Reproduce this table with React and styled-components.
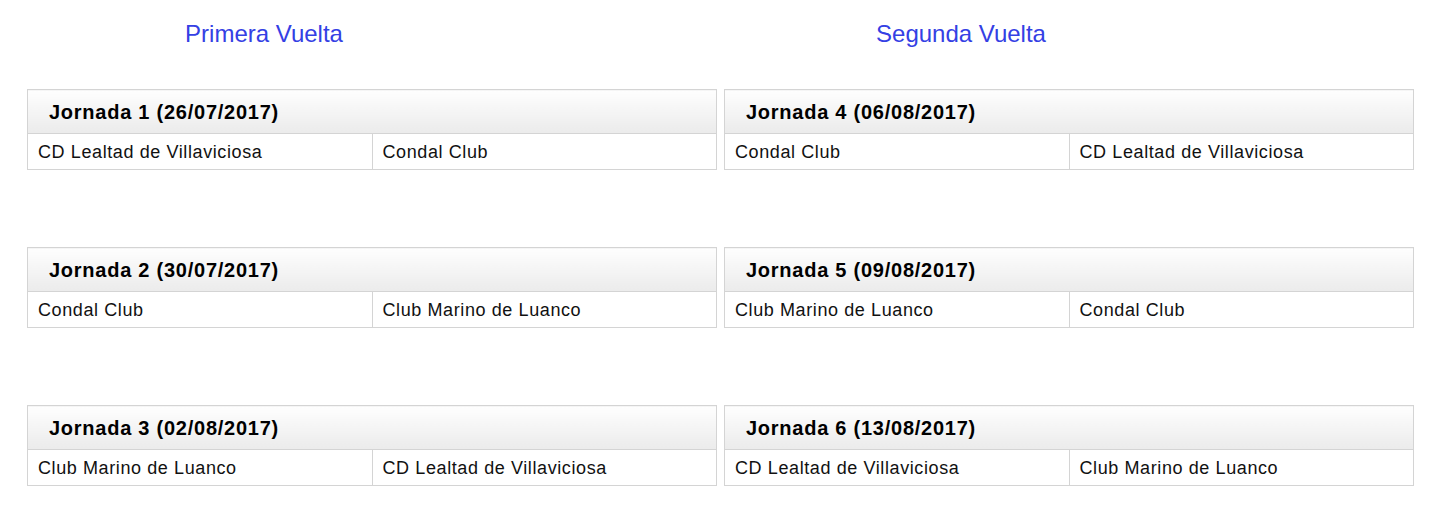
import React from 'react';
import styled, { createGlobalStyle } from 'styled-components';

const GlobalStyle = createGlobalStyle`
  body {
    margin: 0;
    background: #fff;
    font-family: "Liberation Sans", Arial, sans-serif;
  }
`;

const vueltas = [
  {
    title: 'Primera Vuelta',
    jornadas: [
      { num: 1, date: '26/07/2017', home: 'CD Lealtad de Villaviciosa', away: 'Condal Club' },
      { num: 2, date: '30/07/2017', home: 'Condal Club', away: 'Club Marino de Luanco' },
      { num: 3, date: '02/08/2017', home: 'Club Marino de Luanco', away: 'CD Lealtad de Villaviciosa' },
    ],
  },
  {
    title: 'Segunda Vuelta',
    jornadas: [
      { num: 4, date: '06/08/2017', home: 'Condal Club', away: 'CD Lealtad de Villaviciosa' },
      { num: 5, date: '09/08/2017', home: 'Club Marino de Luanco', away: 'Condal Club' },
      { num: 6, date: '13/08/2017', home: 'CD Lealtad de Villaviciosa', away: 'Club Marino de Luanco' },
    ],
  },
];

const App = () => {
  return (
    <>
      <GlobalStyle />
      <Page>
        {vueltas.map((v) => (
          <Column key={v.title}>
            <VueltaTitle>{v.title}</VueltaTitle>
            <JornadaList>
              {v.jornadas.map((j) => (
                <JornadaTable key={j.num}>
                  <thead>
                    <tr>
                      <JornadaHead colSpan={2}>
                        Jornada {j.num} ({j.date})
                      </JornadaHead>
                    </tr>
                  </thead>
                  <tbody>
                    <tr>
                      <TeamCell>{j.home}</TeamCell>
                      <TeamCell>{j.away}</TeamCell>
                    </tr>
                  </tbody>
                </JornadaTable>
              ))}
            </JornadaList>
          </Column>
        ))}
      </Page>
    </>
  );
};

export default App;

const Page = styled.div`
  display: grid;
  grid-template-columns: 690px 690px;
  column-gap: 7px;
  padding: 0 21px 0 27px;
`;

const Column = styled.div`
  display: flex;
  flex-direction: column;
`;

const VueltaTitle = styled.div`
  width: 474px;
  text-align: center;
  color: #3440e4;
  font-size: 24px;
  line-height: 28px;
  padding-top: 20px;
  margin-bottom: 41px;
`;

const JornadaList = styled.div`
  display: flex;
  flex-direction: column;
  gap: 77px;
`;

const JornadaTable = styled.table`
  width: 100%;
  border-collapse: collapse;
  table-layout: fixed;
  border: 1px solid #d4d4d4;
`;

const JornadaHead = styled.th`
  height: 41px;
  padding: 2px 0 0 21px;
  text-align: left;
  font-size: 20px;
  font-weight: 700;
  letter-spacing: 0.75px;
  color: #000;
  background: linear-gradient(to bottom, #fefefe, #ebebeb);
  border: 1px solid #d4d4d4;
`;

const TeamCell = styled.td`
  height: 34px;
  padding: 1px 0 0 10px;
  font-size: 18px;
  letter-spacing: 0.6px;
  color: #111;
  border: 1px solid #d4d4d4;
  white-space: nowrap;
`;
